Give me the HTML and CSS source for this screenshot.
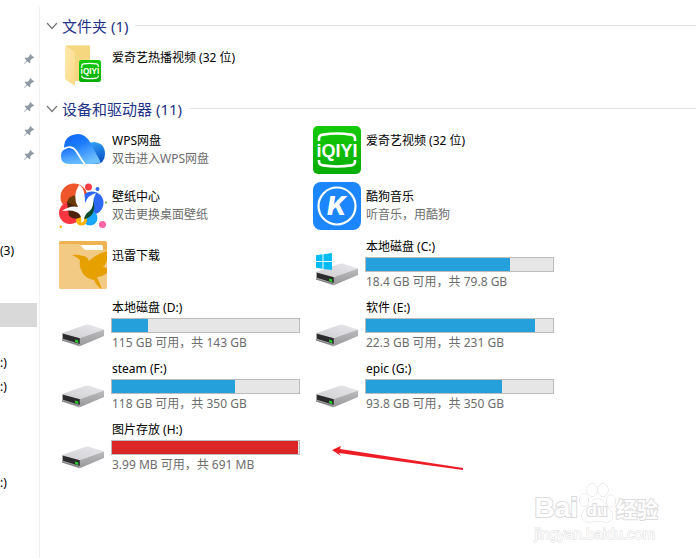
FILE: index.html
```html
<!DOCTYPE html>
<html lang="zh-CN">
<head>
<meta charset="utf-8">
<title>此电脑</title>
<link rel="stylesheet" href="styles.css">
</head>
<body>
<svg class="defs" aria-hidden="true">
  <defs>
    <linearGradient id="driveTop" x1="0" y1="1" x2="1" y2="0"><stop offset="0" stop-color="#cfcfd2"/><stop offset="1" stop-color="#e8e8ec"/></linearGradient>
    <linearGradient id="driveSide" x1="0" y1="0" x2="0" y2="1"><stop offset="0" stop-color="#bcbcbf"/><stop offset="1" stop-color="#98989b"/></linearGradient>
    <linearGradient id="cloudMain" x1="0" y1="0" x2=".6" y2="1"><stop offset="0" stop-color="#0a62f6"/><stop offset=".45" stop-color="#1c7cfb"/><stop offset="1" stop-color="#6fc0ff"/></linearGradient>
    <linearGradient id="cloudRight" x1="0" y1="0" x2=".3" y2="1"><stop offset="0" stop-color="#35a8fa"/><stop offset="1" stop-color="#0b55c8"/></linearGradient>
    <linearGradient id="cloudLeft" x1="0" y1="0" x2=".3" y2="1"><stop offset="0" stop-color="#146cf8"/><stop offset="1" stop-color="#66baff"/></linearGradient>
    <linearGradient id="green" x1="0" y1="0" x2="0" y2="1"><stop offset="0" stop-color="#14ca0a"/><stop offset="1" stop-color="#08ad04"/></linearGradient>
    <linearGradient id="folderFront" x1="0" y1="0" x2="1" y2="1"><stop offset="0" stop-color="#ffeab0"/><stop offset="1" stop-color="#fbd986"/></linearGradient>
  </defs>
  <symbol id="pin" viewBox="0 0 12 12"><path d="M7.2 1 11 4.6 9.9 5.6 9.2 5.4 7.3 7.3 7.4 9.4 6.5 10.3 4.4 8.2 1.2 11.2.9 10.9 3.7 7.500 1.7 5.500 2.6 4.6 4.8 4.7 6.7 2.8 6.3 2Z" fill="#8d9aa5"/></symbol>
  <symbol id="chevron" viewBox="0 0 12 12"><path d="M1 3 6 8.5 11 3" fill="none" stroke="#777" stroke-width="1.2"/></symbol>
  <symbol id="iqiyi" viewBox="0 0 48 48">
    <rect width="48" height="48" rx="5" fill="url(#green)"/>
    <path d="M6 15V12.500Q6 9.200 10 8.600Q24 6.400 38 8.600Q42 9.200 42 12.500V15M6 34V35.500Q6 38.800 10 39.400Q24 41.600 38 39.400Q42 38.800 42 35.500V34" fill="none" stroke="#fff" stroke-width="2.600"/>
  </symbol>
  <symbol id="drive" viewBox="0 0 48 48">
    <path d="M3 31 26 23Q28 22 30 22.700L45 27.500 21 36Z" fill="url(#driveTop)"/>
    <path d="M21 36 45 27.500V34L22 43.700Q20.500 44.500 19 44L21 43Z" fill="url(#driveSide)"/>
    <path d="M3 31 21 36V43.500Q20.300 44.500 19 44L3.500 38.800Q3 38.500 3 38Z" fill="#aaaaac"/>
    <path d="M4 31.700 20.800 36.200V41.900L4 36.700Z" fill="#2b2b2d"/>
    <path d="M3 38 20 42.800" stroke="#686869" stroke-width=".7"/>
    <path d="m16.200 37.600 3 .8v2.500l-3-.9z" fill="#27d32c"/>
  </symbol>
</svg>

<div class="window">
  <nav class="tree" aria-label="导航窗格">
    <ul class="tree-group">
      <li class="tree-row tree-pin"><svg><use href="#pin"/></svg></li>
      <li class="tree-row tree-pin"><svg><use href="#pin"/></svg></li>
      <li class="tree-row tree-pin"><svg><use href="#pin"/></svg></li>
      <li class="tree-row tree-pin"><svg><use href="#pin"/></svg></li>
      <li class="tree-row tree-pin"><svg><use href="#pin"/></svg></li>
      <li class="tree-row"></li>
      <li class="tree-row"></li>
      <li class="tree-row"></li>
      <li class="tree-row">(3)</li>
      <li class="tree-row"></li>
    </ul>
    <ul class="tree-group">
      <li class="tree-row tree-selected"></li>
      <li class="tree-row"></li>
      <li class="tree-row">:)</li>
      <li class="tree-row">:)</li>
      <li class="tree-row"></li>
      <li class="tree-row"></li>
      <li class="tree-row"></li>
      <li class="tree-row">:)</li>
    </ul>
  </nav>

  <main class="content">
    <section class="group">
      <h2 class="group-title"><svg><use href="#chevron"/></svg>文件夹 (1)</h2>
      <div class="tiles">
        <article class="tile">
          <svg class="icon" viewBox="0 0 48 48">
            <path d="M7 2.500H31V38H13Z" fill="#f5d77f"/>
            <path d="M6 2.500 15 8Q16 9 16 11V41Q16 43 14.500 42L7 37Q6 36 6 34Z" fill="url(#folderFront)"/>
            <svg x="20" y="17" width="22" height="22" viewBox="0 0 48 48"><use href="#iqiyi"/><text x="24" y="31" text-anchor="middle" class="iqiyi-word">iQIYI</text></svg>
          </svg>
          <div class="info"><span class="name">爱奇艺热播视频 (32 位)</span></div>
        </article>
      </div>
    </section>

    <section class="group">
      <h2 class="group-title"><svg><use href="#chevron"/></svg>设备和驱动器 (11)</h2>
      <div class="tiles">
        <article class="tile">
          <svg class="icon" viewBox="0 0 48 48">
            <path d="M27 37 29 18Q31 16 35 16Q46 17 46 28Q46 38 36 38H30Z" fill="url(#cloudRight)"/>
            <path d="M5 22Q5 9 19 8Q26 8 31 16Q34 22 39 31Q42 36 41 37Q39 38 26 38Q20 31 16 24Q12 20 5 22Z" fill="url(#cloudMain)"/>
            <path d="M2 30Q2 23 9 22Q15 21 18 28L25 38H10Q2 38 2 30Z" fill="url(#cloudLeft)"/>
            <path d="M3 24Q12 17 18 26Q22 33 26 38.500" fill="none" stroke="#fff" stroke-width="1.600"/>
          </svg>
          <div class="info"><span class="name">WPS网盘</span><span class="note">双击进入WPS网盘</span></div>
        </article>

        <article class="tile">
          <svg class="icon" viewBox="0 0 48 48"><use href="#iqiyi"/><text x="24" y="31" text-anchor="middle" class="iqiyi-word">iQIYI</text></svg>
          <div class="info"><span class="name">爱奇艺视频 (32 位)</span></div>
        </article>

        <article class="tile">
          <svg class="icon" viewBox="0 0 48 48">
            <circle cx="15" cy="15" r="13.500" fill="#f0562b"/>
            <circle cx="33" cy="21" r="11.500" fill="#2e67f3"/>
            <circle cx="11" cy="31" r="11" fill="#fb3640"/>
            <circle cx="31" cy="36" r="7.500" fill="#1aa6ff"/>
            <circle cx="22.500" cy="38" r="5.500" fill="#ffb400"/>
            <path d="M8 20Q18 19 25 28L22 35Q16 39 10 34Z" fill="#4c2009"/>
            <path d="M8 20Q9 14 18 13L22 27Z" fill="#6a3b08"/>
            <path d="M23 32 33 15Q37 24 34 31Q30 37 24 37Z" fill="#0a4b2b"/>
            <path d="M20 3Q26 5 26 21Q29 13 37 11Q34 16 34 22Q34 27 28 31Q25 34 25 39L22 41Q23 36 21 33Q17 27 3 29Q11 23 19 25Q13 14 20 3Z" fill="#fff"/>
            <circle cx="29.500" cy="5" r="3.500" fill="#fa3c46"/>
            <circle cx="38.500" cy="7" r="2" fill="#2f67f2"/>
            <circle cx="47" cy="20.500" r="1" fill="#54ae24"/>
            <circle cx="43.500" cy="42.500" r="3.500" fill="#fb63a6"/>
            <circle cx="1.800" cy="44.800" r="1.200" fill="#ffb400"/>
          </svg>
          <div class="info"><span class="name">壁纸中心</span><span class="note">双击更换桌面壁纸</span></div>
        </article>

        <article class="tile">
          <svg class="icon" viewBox="0 0 48 48">
            <rect width="48" height="48" rx="8" fill="#1c86fe"/>
            <circle cx="24" cy="24" r="18.500" fill="none" stroke="#fff" stroke-width="2.200"/>
            <text x="23.500" y="33" text-anchor="middle" class="kugou-word">K</text>
          </svg>
          <div class="info"><span class="name">酷狗音乐</span><span class="note">听音乐，用酷狗</span></div>
        </article>

        <article class="tile tile-drive">
          <svg class="icon" viewBox="0 0 48 48">
            <rect width="48" height="48" rx="2" fill="#eeb252"/>
            <path d="M0 3H20L27 9H48V46Q48 48 46 48H2Q0 48 0 46Z" fill="#f2ca84"/>
            <path d="M21 4H42Q44 4 44 6V9H27Q25 9 24 7Z" fill="#fff"/>
            <path d="M13 14Q18 13 24 15Q28 15 30 20Q37 13 48 10V20Q46 24 44 26L48 27V32Q43 36 38 36L43 48Q38 46 35 39Q25 37 22 29Q20 24 21 19Q18 16 13 14Z" fill="#e6a000"/>
          </svg>
          <div class="info"><span class="name">迅雷下载</span></div>
        </article>

        <article class="tile tile-drive">
          <svg class="icon" viewBox="0 0 48 48">
            <use href="#drive"/>
            <path d="M3 14.300 9.500 13.300V20H3ZM10.500 13.200 19 12V20H10.500ZM3 21H9.500V27.800L3 26.800ZM10.500 21H19V29L10.500 27.900Z" fill="#00bcf2"/>
          </svg>
          <div class="info"><span class="name">本地磁盘 (C:)</span><div class="bar"><div class="fill" style="width:77%"></div></div><span class="note">18.4 GB 可用，共 79.8 GB</span></div>
        </article>

        <article class="tile tile-drive">
          <svg class="icon"><use href="#drive"/></svg>
          <div class="info"><span class="name">本地磁盘 (D:)</span><div class="bar"><div class="fill" style="width:19%"></div></div><span class="note">115 GB 可用，共 143 GB</span></div>
        </article>

        <article class="tile tile-drive">
          <svg class="icon"><use href="#drive"/></svg>
          <div class="info"><span class="name">软件 (E:)</span><div class="bar"><div class="fill" style="width:90.4%"></div></div><span class="note">22.3 GB 可用，共 231 GB</span></div>
        </article>

        <article class="tile tile-drive">
          <svg class="icon"><use href="#drive"/></svg>
          <div class="info"><span class="name">steam (F:)</span><div class="bar"><div class="fill" style="width:66%"></div></div><span class="note">118 GB 可用，共 350 GB</span></div>
        </article>

        <article class="tile tile-drive">
          <svg class="icon"><use href="#drive"/></svg>
          <div class="info"><span class="name">epic (G:)</span><div class="bar"><div class="fill" style="width:72.7%"></div></div><span class="note">93.8 GB 可用，共 350 GB</span></div>
        </article>

        <article class="tile tile-drive">
          <svg class="icon"><use href="#drive"/></svg>
          <div class="info"><span class="name">图片存放 (H:)</span><div class="bar"><div class="fill fill-full" style="width:99.4%"></div></div><span class="note">3.99 MB 可用，共 691 MB</span></div>
          <svg class="arrow" viewBox="0 0 134 28" aria-hidden="true"><path d="M1 6 10 2 9 5 132 24V26L8 9 10 12Z" fill="#ee1c25"/></svg>
        </article>
      </div>
    </section>
  </main>

  <div class="watermark">
    <div class="mark-logo">
      <span>Bai</span>
      <span class="paw">
        <svg viewBox="0 0 38 42" aria-hidden="true"><g fill="#fff" stroke="#dcdcdc"><ellipse cx="6" cy="18" rx="4.500" ry="6"/><ellipse cx="14" cy="8" rx="5" ry="6.500"/><ellipse cx="25" cy="8" rx="5" ry="6.500"/><ellipse cx="33" cy="19" rx="4.500" ry="6"/><path d="M19 17C13 17 11 23 7 27C2 31 3 40 10 40C14 40 16 39 19 39C23 39 25 40 29 40C36 39 36 31 31 27C27 23 26 17 19 17Z"/></g></svg>
        <span class="paw-word">du</span>
      </span>
      <span class="mark-cn">经验</span>
    </div>
    <div class="mark-url">jingyan.baidu.com</div>
  </div>
</div>
</body>
</html>
```

FILE: styles.css
```css
* {
  box-sizing: border-box;
}

body {
  margin: 0;
  background: #fff;
  color: #000;
  font: 12px/18px "Noto Sans", "Noto Sans CJK SC", sans-serif;
}

ul,
h2 {
  margin: 0;
  padding: 0;
  list-style: none;
  font-weight: 400;
}

.defs {
  position: absolute;
  width: 0;
  height: 0;
}

.window {
  position: relative;
  display: flex;
  min-height: 100vh;
  padding-top: 7px;
  overflow: hidden;
}

/* Navigation pane */
.tree {
  flex: 0 0 40px;
  padding-top: 40px;
  border-right: 1px solid #f0f0f0;
}

.tree-group + .tree-group {
  margin-top: 16px;
}

.tree-row {
  height: 24px;
  line-height: 24px;
}

.tree-pin {
  display: flex;
  align-items: center;
  justify-content: flex-end;
  padding-right: 4px;
}

.tree-pin svg {
  width: 12px;
  height: 12px;
}

.tree-selected {
  width: 37px;
  background: #d9d9d9;
}

/* File list */
.content {
  flex: 1;
  min-width: 0;
  padding-top: 6px;
}

.group {
  padding-left: 6px;
}

.group + .group {
  margin-top: 1px;
}

.group-title {
  display: flex;
  align-items: center;
  gap: 4px;
  height: 26px;
  padding-bottom: 1px;
  color: #1e3287;
  font-size: 15px;
  line-height: 24px;
}

.group-title svg {
  width: 12px;
  height: 12px;
}

.group-title::after {
  content: "";
  flex: 1;
  height: 1px;
  margin-left: 3px;
  background: #e2e2e2;
}

.tiles {
  display: grid;
  grid-template-columns: repeat(auto-fill, 242px);
  column-gap: 12px;
  padding-left: 13px;
}

.tile {
  position: relative;
  display: flex;
  align-items: center;
  gap: 4px;
  min-height: 56px;
}

.tile-drive {
  min-height: 61px;
}

.icon {
  flex: none;
  width: 48px;
  height: 48px;
}

.info {
  display: flex;
  flex: 1;
  flex-direction: column;
  min-height: 36px;
}

.name,
.note {
  padding-left: 1px;
  white-space: nowrap;
}

.note {
  color: #6d6d6d;
}

.bar {
  width: 189px;
  height: 15px;
  margin: 1px 0;
  border: 1px solid #bcbcbc;
  background: #e6e6e6;
}

.fill {
  height: 100%;
  background: #26a0da;
}

.fill-full {
  background: #da2626;
}

.iqiyi-word {
  fill: #fff;
  font: 700 18px "Liberation Sans", sans-serif;
}

.kugou-word {
  fill: #fff;
  font: italic 800 26px Inter, sans-serif;
}

/* Annotation pointing at the full drive */
.arrow {
  position: absolute;
  top: 27px;
  left: 272px;
  width: 134px;
  height: 28px;
}

/* Watermark */
.watermark {
  position: absolute;
  right: 38px;
  bottom: 14px;
  color: #fff;
  -webkit-text-stroke: 2px #dcdcdc;
  paint-order: stroke fill;
}

.mark-logo {
  display: flex;
  align-items: flex-end;
  height: 42px;
  font: 700 28px/32px "Liberation Sans", sans-serif;
}

.paw {
  position: relative;
  width: 38px;
  height: 42px;
}

.paw svg {
  width: 38px;
  height: 42px;
}

.paw-word {
  position: absolute;
  right: 0;
  bottom: 0;
  left: 0;
  font-size: 17px;
  line-height: 26px;
  text-align: center;
}

.mark-cn {
  font: 700 21px/32px "Noto Sans CJK SC", sans-serif;
}

.mark-url {
  font: 15px/20px "Liberation Sans", sans-serif;
  -webkit-text-stroke: 1px #dcdcdc;
}
```
